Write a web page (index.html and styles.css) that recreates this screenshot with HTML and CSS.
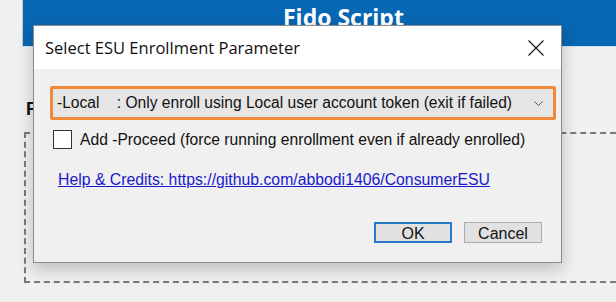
FILE: index.html
```html
<!DOCTYPE html>
<html>
<head>
  <meta charset="utf-8">
  <title>Fido Script - ESU</title>
  <link rel="stylesheet" href="styles.css">
</head>
<body>
  <!-- Hauptfenster im Hintergrund -->
  <div class="app">
    <div class="banner">Fido Script</div>
    <div class="section-title">F</div>
    <div class="dashed-box"></div>
  </div>

  <!-- Modaler Dialog -->
  <div class="dialog">
    <div class="dialog-title">
      <span>Select ESU Enrollment Parameter</span>
      <svg class="close" width="16" height="16" viewBox="0 0 16 16">
        <path d="M0.5 0.5 L15.5 15.5 M15.5 0.5 L0.5 15.5" stroke="#111" stroke-width="1.1" fill="none"/>
      </svg>
    </div>
    <div class="dialog-body">
      <div class="combo">
        <span class="combo-text">-Local&nbsp;&nbsp;&nbsp;&nbsp;: Only enroll using Local user account token (exit if failed)</span>
        <svg class="chevron" width="9" height="5" viewBox="0 0 9 5">
          <path d="M0.5 0.5 L4.5 4.5 L8.5 0.5" stroke="#555" stroke-width="1" fill="none"/>
        </svg>
      </div>
      <label class="check-row">
        <span class="checkbox"></span>
        <span>Add -Proceed (force running enrollment even if already enrolled)</span>
      </label>
      <a class="help-link" href="#">Help &amp; Credits: https://github.com/abbodi1406/ConsumerESU</a>
      <div class="buttons">
        <button class="btn btn-default">OK</button>
        <button class="btn">Cancel</button>
      </div>
    </div>
  </div>
</body>
</html>
```

FILE: styles.css
```css
body {
  margin: 0;
  padding: 0;
  background-color: #f0f0f0;
  font-family: "Liberation Sans", Arial, sans-serif;
  overflow: hidden;
}
.app {
  width: 616px;
  height: 302px;
  background-color: #f0f0f0;
}
.banner {
  margin-left: 22px;
  height: 47px;
  background-color: #0867b3;
  border-left: 1px solid #c8c8c8;
  border-bottom: 1px solid #d6e2ee;
  box-sizing: border-box;
  color: #fff;
  font-family: "Open Sans", sans-serif;
  font-weight: bold;
  font-size: 23px;
  line-height: 34px;
  padding-left: 260px;
}
.section-title {
  margin: 53px 0 0 26px;
  font-weight: bold;
  font-size: 18px;
  color: #111;
  line-height: 18px;
}
.dashed-box {
  margin: 14px 0 0 24px;
  height: 151px;
  border: 2px dashed #7a7a7a;
  border-right: none;
  box-sizing: border-box;
}

/* Dialog */
.dialog {
  position: absolute;
  left: 33px;
  top: 25px;
  width: 529px;
  height: 238px;
  box-sizing: border-box;
  border: 1px solid #8c8c8c;
  background-color: #f0f0f0;
  box-shadow: 0 6px 16px rgba(0, 0, 0, 0.22);
}
.dialog-title {
  height: 43px;
  background-color: #fff;
  display: flex;
  align-items: center;
  justify-content: space-between;
  padding: 0 17px 0 11px;
  font-family: "Open Sans", sans-serif;
  font-size: 16.5px;
  color: #111;
}
.dialog-body {
  padding: 17px 5px 0 16px;
}
.combo {
  width: 506px;
  height: 34px;
  box-sizing: border-box;
  border: 3px solid #f08a3a;
  border-radius: 2px;
  background-color: #e5e5e5;
  display: flex;
  align-items: center;
  justify-content: space-between;
  padding: 0 10px 0 4px;
  font-size: 15.6px;
  color: #111;
}
.chevron {
  margin-top: 1px;
}
.check-row {
  display: flex;
  align-items: center;
  gap: 8px;
  margin: 10px 0 0 3px;
  font-size: 15.65px;
  color: #111;
}
.checkbox {
  width: 19px;
  height: 19px;
  box-sizing: border-box;
  border: 1px solid #333;
  background-color: #fff;
}
.help-link {
  display: block;
  margin: 22px 0 0 8px;
  font-size: 15.8px;
  color: #1a1acc;
  text-decoration: underline;
}
.buttons {
  display: flex;
  justify-content: flex-end;
  gap: 12px;
  margin: 33px 14px 0 0;
}
.btn {
  width: 78px;
  height: 21px;
  box-sizing: border-box;
  border: 1px solid #adadad;
  background-color: #e1e1e1;
  font-family: "Liberation Sans", Arial, sans-serif;
  font-size: 16px;
  color: #111;
  padding: 3px 0 0 0;
  line-height: 16px;
  border-radius: 0;
}
.btn-default {
  border: 2px solid #2a78c8;
  padding-top: 2px;
}
```
